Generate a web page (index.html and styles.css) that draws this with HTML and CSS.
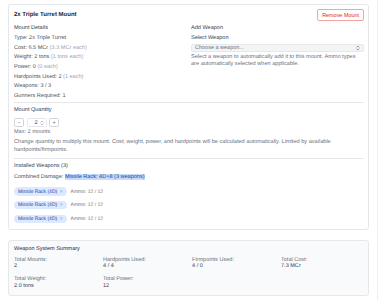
FILE: index.html
```html
<!DOCTYPE html>
<html lang="en">
<head>
  <meta charset="UTF-8">
  <title>Weapon Mount</title>
  <link rel="stylesheet" href="styles.css">
</head>
<body>
  <div class="page">
    <section class="mount-card">
      <header class="mount-head">
        <h2>2x Triple Turret Mount</h2>
        <button class="btn-remove">Remove Mount</button>
      </header>

      <div class="mount-grid">
        <div class="details">
          <h3>Mount Details</h3>
          <p><span class="k">Type:</span> 2x Triple Turret</p>
          <p><span class="k">Cost:</span> 6.5 MCr <span class="muted">(3.3 MCr each)</span></p>
          <p><span class="k">Weight:</span> 2 tons <span class="muted">(1 tons each)</span></p>
          <p><span class="k">Power:</span> 0 <span class="muted">(0 each)</span></p>
          <p><span class="k">Hardpoints Used:</span> 2 <span class="muted">(1 each)</span></p>
          <p><span class="k">Weapons:</span> 3 / 3</p>
          <p><span class="k">Gunners Required:</span> 1</p>
        </div>

        <div class="add-weapon">
          <h3>Add Weapon</h3>
          <label class="field-label">Select Weapon</label>
          <div class="select">
            <span>Choose a weapon...</span>
            <svg width="4" height="6" viewBox="0 0 4 6"><path d="M0.6 2.4 L2 1 L3.4 2.4 M0.6 3.6 L2 5 L3.4 3.6" fill="none" stroke="#6b7280" stroke-width="0.7"/></svg>
          </div>
          <p class="hint">Select a weapon to automatically add it to this mount. Ammo types are automatically selected when applicable.</p>
        </div>
      </div>

      <!-- quantity -->
      <div class="qty">
        <h3>Mount Quantity</h3>
        <div class="stepper">
          <button class="step-btn">&minus;</button>
          <div class="num">
            <span>2</span>
            <svg width="4" height="6" viewBox="0 0 4 6"><path d="M0.6 2.4 L2 1 L3.4 2.4 M0.6 3.6 L2 5 L3.4 3.6" fill="none" stroke="#9ca3af" stroke-width="0.7"/></svg>
          </div>
          <button class="step-btn">+</button>
        </div>
        <p class="max">Max: 2 mounts</p>
        <p class="hint">Change quantity to multiply this mount. Cost, weight, power, and hardpoints will be calculated automatically. Limited by available hardpoints/firmpoints.</p>
      </div>

      <!-- installed weapons -->
      <div class="installed">
        <h3>Installed Weapons (3)</h3>
        <p class="combined">Combined Damage: <span class="sel">Missile Rack: 4D+8 (3 weapons)</span></p>
        <ul class="weapons">
          <li><span class="chip">Missile Rack (4D) <b>&times;</b></span><span class="ammo">Ammo: 12 / 12</span></li>
          <li><span class="chip">Missile Rack (4D) <b>&times;</b></span><span class="ammo">Ammo: 12 / 12</span></li>
          <li><span class="chip">Missile Rack (4D) <b>&times;</b></span><span class="ammo">Ammo: 12 / 12</span></li>
        </ul>
      </div>
    </section>

    <section class="summary">
      <h3>Weapon System Summary</h3>
      <div class="summary-grid">
        <div><span class="lbl">Total Mounts:</span><span class="val">2</span></div>
        <div><span class="lbl">Hardpoints Used:</span><span class="val">4 / 4</span></div>
        <div><span class="lbl">Firmpoints Used:</span><span class="val">4 / 0</span></div>
        <div><span class="lbl">Total Cost:</span><span class="val">7.3 MCr</span></div>
        <div><span class="lbl">Total Weight:</span><span class="val">2.0 tons</span></div>
        <div><span class="lbl">Total Power:</span><span class="val">12</span></div>
      </div>
    </section>
  </div>
</body>
</html>
```

FILE: styles.css
```css
* { margin: 0; padding: 0; box-sizing: border-box; }
body {
  background: #fff;
  font-family: "Liberation Sans", Arial, sans-serif;
  font-size: 5.55px;
  color: #4b5563;
  text-rendering: geometricPrecision;
}
.page {
  width: 378px;
  min-height: 300px;
  padding: 4px 8px 6px 8px;
  border-right: 1px solid #eceef1;
}
h2, h3 { font-weight: normal; }

/* mount card */
.mount-card {
  border: 1px solid #e5e7eb;
  border-radius: 3px;
  padding: 4px 4px 5.7px 5px;
  background: #fff;
}
.mount-head {
  display: flex;
  justify-content: space-between;
  align-items: center;
  height: 12px;
}
.mount-head h2 {
  font-size: 6px;
  font-weight: bold;
  color: #1f2937;
}
.btn-remove {
  height: 12px;
  padding: 0 4px;
  border: 1px solid #f4a3a3;
  border-radius: 2px;
  background: #fff;
  color: #dc2626;
  font-family: inherit;
  font-size: 5.45px;
}

.mount-grid {
  display: grid;
  grid-template-columns: 1fr 1fr;
  gap: 4px;
  margin-top: 3.2px;
}
h3 {
  font-size: 5.55px;
  line-height: 9.7px;
  color: #374151;
}
.details p {
  line-height: 9.7px;
  color: #4b5563;
}
.details .k { color: #4b5563; }
.muted { color: #9ca3af; }

.field-label {
  display: block;
  line-height: 9.7px;
  color: #374151;
}
.select {
  display: flex;
  justify-content: space-between;
  align-items: center;
  height: 8px;
  padding: 0 3px;
  border: 1px solid #e5e7eb;
  border-radius: 2px;
  background: #f3f4f6;
  font-size: 5.5px;
  color: #6b7280;
}
.hint {
  font-size: 5.6px;
  line-height: 7px;
  color: #6b7280;
}
.add-weapon .hint { margin-top: 2.8px; }

/* quantity */
.qty {
  border-top: 1px solid #e5e7eb;
  padding: 3px 0 4.6px;
}
.stepper {
  display: flex;
  gap: 2.5px;
  margin-top: 2.2px;
  height: 9.6px;
}
.step-btn {
  width: 10px;
  height: 9.6px;
  border: 1px solid #d1d5db;
  border-radius: 1.5px;
  background: #fff;
  color: #6b7280;
  font-family: inherit;
  font-size: 5.5px;
  line-height: 1;
}
.num {
  width: 20px;
  display: flex;
  align-items: center;
  justify-content: flex-end;
  gap: 2px;
  padding-right: 2px;
  border: 1px solid #e5e7eb;
  border-radius: 1.5px;
  color: #374151;
}
.max {
  margin-top: 2.2px;
  line-height: 7px;
  color: #6b7280;
}
.qty .hint {
  margin-top: 1.2px;
  line-height: 8px;
}

/* installed */
.installed {
  border-top: 1px solid #e5e7eb;
  padding-top: 2.8px;
}
.combined {
  margin-top: 1.6px;
  line-height: 9.7px;
  color: #4b5563;
}
.combined .sel {
  background: #c6dcf8;
  color: #1e40af;
}
.weapons {
  list-style: none;
  display: flex;
  flex-direction: column;
  gap: 5.1px;
  margin-top: 4.3px;
}
.weapons li {
  display: flex;
  align-items: center;
  gap: 4px;
}
.chip {
  display: inline-flex;
  align-items: center;
  gap: 2.5px;
  height: 8.5px;
  padding: 0 4px;
  border-radius: 5px;
  background: #dbeafe;
  color: #1e40af;
  font-size: 5px;
}
.chip b { font-weight: normal; color: #60a5fa; }
.ammo {
  font-size: 5px;
  color: #6b7280;
}

/* summary */
.summary {
  margin-top: 10px;
  border: 1px solid #e5e7eb;
  border-radius: 3px;
  background: #f9fafb;
  padding: 5px;
}
.summary h3 {
  line-height: 7px;
  color: #1f2937;
}
.summary-grid {
  display: grid;
  grid-template-columns: repeat(4, 1fr);
  column-gap: 7px;
  row-gap: 6.2px;
  margin-top: 4px;
}
.summary-grid div { display: flex; flex-direction: column; }
.lbl {
  line-height: 6.7px;
  color: #6b7280;
}
.val {
  line-height: 6.7px;
  color: #374151;
}
```
